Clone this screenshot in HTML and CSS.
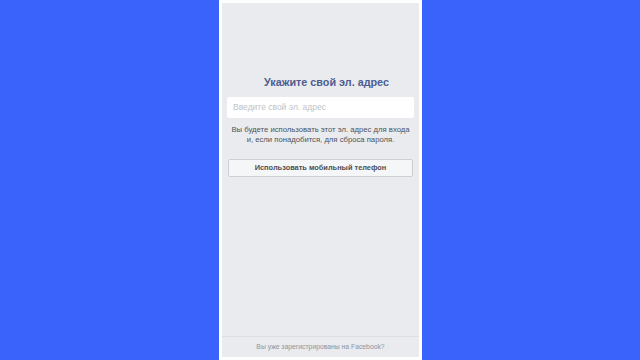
FILE: index.html
```html
<!DOCTYPE html>
<html lang="ru">
<head>
<meta charset="utf-8">
<link rel="stylesheet" href="styles.css">
</head>
<body>
<div class="stage">
  <div class="phone">
    <div class="screen">
      <div class="content">
        <h1 class="title">Укажите свой эл. адрес</h1>
        <div class="input">Введите свой эл. адрес</div>
        <p class="hint">Вы будете использовать этот эл. адрес для входа<br>и, если понадобится, для сброса пароля.</p>
        <div class="btn">Использовать мобильный телефон</div>
      </div>
      <div class="footer">Вы уже зарегистрированы на Facebook?</div>
    </div>
  </div>
</div>
</body>
</html>
```
FILE: styles.css
```css
html, body {
  margin: 0;
  padding: 0;
  height: 100%;
}
body {
  background: #3a63fb;
  font-family: "Liberation Sans", Arial, sans-serif;
}
.stage {
  display: flex;
  justify-content: center;
  height: 360px;
}
.phone {
  width: 197px;
  height: 354px;
  background: #ffffff;
  padding: 3px 3px 3px 3px;
  margin-left: 1px;
}
.screen {
  height: 100%;
  background: #e9ebee;
  display: flex;
  flex-direction: column;
}
.content {
  flex: 1;
  padding: 72px 5px 0 5px;
  display: flex;
  flex-direction: column;
}
.title {
  margin: 0;
  padding-left: 12px;
  font-size: 10.8px;
  line-height: 14px;
  font-weight: bold;
  color: #4d5d92;
  text-align: center;
}
.input {
  margin-top: 8px;
  height: 21px;
  background: #ffffff;
  border-radius: 2px;
  font-size: 8.5px;
  line-height: 21px;
  padding-left: 6px;
  color: #bec3c9;
}
.hint {
  margin: 7px 0 0 0;
  font-size: 7.7px;
  line-height: 10px;
  color: #4f535a;
  text-align: center;
  white-space: nowrap;
}
.btn {
  margin: 14px 1px 0 1px;
  height: 16px;
  border: 1px solid #ccd0d5;
  border-radius: 2px;
  background: #f5f6f7;
  font-size: 7.4px;
  line-height: 16px;
  font-weight: bold;
  color: #4b4f56;
  text-align: center;
}
.footer {
  height: 20px;
  border-top: 1px solid #dddfe2;
  font-size: 6.8px;
  line-height: 20px;
  color: #8d949e;
  text-align: center;
}
```
